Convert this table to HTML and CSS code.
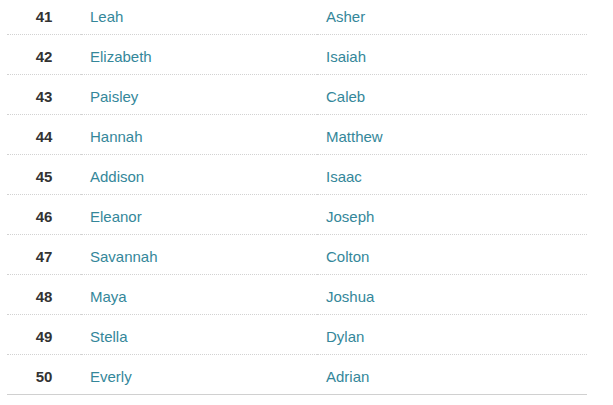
FILE: index.html
```html
<!DOCTYPE html>
<html>
<head>
<meta charset="utf-8">
<link rel="stylesheet" href="styles.css">
</head>
<body>
<table class="names">
<tbody>
<tr><td class="rank">41</td><td class="name">Leah</td><td class="name">Asher</td></tr>
<tr><td class="rank">42</td><td class="name">Elizabeth</td><td class="name">Isaiah</td></tr>
<tr><td class="rank">43</td><td class="name">Paisley</td><td class="name">Caleb</td></tr>
<tr><td class="rank">44</td><td class="name">Hannah</td><td class="name">Matthew</td></tr>
<tr><td class="rank">45</td><td class="name">Addison</td><td class="name">Isaac</td></tr>
<tr><td class="rank">46</td><td class="name">Eleanor</td><td class="name">Joseph</td></tr>
<tr><td class="rank">47</td><td class="name">Savannah</td><td class="name">Colton</td></tr>
<tr><td class="rank">48</td><td class="name">Maya</td><td class="name">Joshua</td></tr>
<tr><td class="rank">49</td><td class="name">Stella</td><td class="name">Dylan</td></tr>
<tr class="last"><td class="rank">50</td><td class="name">Everly</td><td class="name">Adrian</td></tr>
</tbody>
</table>
</body>
</html>
```

FILE: styles.css
```css
html, body {
  margin: 0;
  padding: 0;
  background: #fff;
}
body {
  font-family: "Liberation Sans", Arial, sans-serif;
  font-size: 15px;
  line-height: 17px;
}
.names {
  border-collapse: collapse;
  margin: -5px 0 0 7px;
  width: 580px;
  table-layout: fixed;
}
.names td {
  padding: 13px 0 9px 9px;
  border-bottom: 1px dotted #d2d2d2;
  white-space: nowrap;
}
.names tr.last td {
  border-bottom: 1px solid #d0d0d0;
}
.names td.rank {
  width: 74px;
  padding-left: 0;
  text-align: center;
  font-weight: bold;
  color: #333;
}
.names td.name {
  color: #34879a;
}
.names td.name:nth-child(2) {
  width: 227px;
}
```
